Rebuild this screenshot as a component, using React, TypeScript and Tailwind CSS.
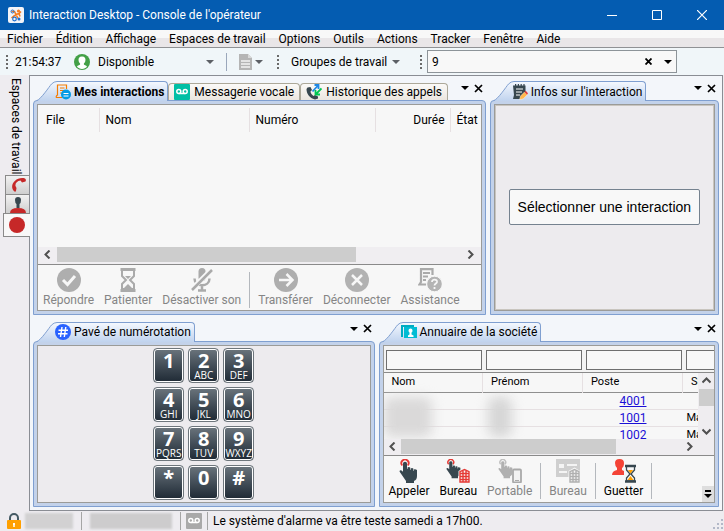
import type { ReactNode } from "react";

const menus = ["Fichier", "Édition", "Affichage", "Espaces de travail", "Options", "Outils", "Actions", "Tracker", "Fenêtre", "Aide"];

const keys = [
    ["1", ""], ["2", "ABC"], ["3", "DEF"],
    ["4", "GHI"], ["5", "JKL"], ["6", "MNO"],
    ["7", "PQRS"], ["8", "TUV"], ["9", "WXYZ"],
    ["*", ""], ["0", ""], ["#", ""],
];

const directory = [
    { poste: "4001", site: "" },
    { poste: "1001", site: "Mai" },
    { poste: "1002", site: "Mai" },
];

function Caret({ className = "text-[#5c6066]" }: { className?: string }) {
    return (
        <svg viewBox="0 0 8 4" className={`h-1 w-2 shrink-0 ${className}`} fill="currentColor">
            <path d="M0 0h8L4 4z" />
        </svg>
    );
}

function Cross() {
    return (
        <svg viewBox="0 0 9 9" className="h-[9px] w-[9px]" stroke="#000" strokeWidth="1.700" fill="none">
            <path d="M1 1l7 7M8 1L1 8" />
        </svg>
    );
}

function Chevron({ d }: { d: string }) {
    return (
        <svg viewBox="0 0 9 9" className="h-[9px] w-[9px]" stroke="#505050" strokeWidth="2" fill="none">
            <path d={d} />
        </svg>
    );
}

const LEFT = "M6.500 .5l-4 4 4 4";
const RIGHT = "M2.500 .5l4 4-4 4";
const UP = "M.5 6.500l4-4 4 4";
const DOWN = "M.5 2.500l4 4 4-4";

function Grip() {
    return (
        <svg viewBox="0 0 2 14" className="h-[14px] w-[2px] shrink-0" fill="#6a6a6a">
            <path d="M0 0h2v2H0zM0 4h2v2H0zM0 8h2v2H0zM0 12h2v2H0z" />
        </svg>
    );
}

function VoicemailGlyph({ bg }: { bg: string }) {
    return (
        <svg viewBox="0 0 16 16" className="h-4 w-4 shrink-0" fill="none" stroke="#fff" strokeWidth="1.500">
            <rect width="16" height="16" rx="1" fill={bg} stroke="none" />
            <circle cx="4.800" cy="7.500" r="2" />
            <circle cx="11.200" cy="7.500" r="2" />
            <path d="M4.800 9.500h6.400" />
        </svg>
    );
}

function ActiveTab({ icon, children, bold }: { icon: ReactNode; children: ReactNode; bold?: boolean }) {
    return (
        <button role="tab" aria-selected="true" className="relative z-10 -mb-px ml-1 flex h-5 items-stretch">
            <svg viewBox="0 0 20 20" className="h-5 w-5">
                <defs>
                    <linearGradient id="slant" x1="0" y1="0" x2="0" y2="1">
                        <stop offset="0" stopColor="#f4f8fe" />
                        <stop offset="1" stopColor="#c0d3ee" />
                    </linearGradient>
                </defs>
                <path d="M0 20C4 18 12 6 14.500 3Q17 .5 20 .5V20z" fill="url(#slant)" />
                <path d="M0 19.500C4 18 12 6 14.500 3Q17 .5 20 .5" fill="none" stroke="#7f9fd0" />
            </svg>
            <span className={`flex items-center gap-[3px] rounded-tr-sm border-t border-r border-[#7f9fd0] bg-linear-to-b from-[#f4f8fe] to-[#c0d3ee] pr-[3px] whitespace-nowrap ${bold ? "font-bold" : ""}`}>
                <span className="-ml-0.5">{icon}</span>
                {children}
            </span>
        </button>
    );
}

function Tab({ icon, children }: { icon: ReactNode; children: ReactNode }) {
    return (
        <button role="tab" aria-selected="false" className="flex h-[17px] items-center gap-1 rounded-t border border-b-0 border-[#aca899] bg-linear-to-b from-[#fbfaf8] to-[#ebe6df] px-[5px] whitespace-nowrap">
            {icon}
            {children}
        </button>
    );
}

function Panel({ tabs, children, className }: { tabs: ReactNode; children: ReactNode; className: string }) {
    return (
        <section className={`flex min-w-0 flex-col ${className}`}>
            <div className="flex h-6 shrink-0 items-end justify-between pr-[3px]">
                <div role="tablist" className="flex items-end">{tabs}</div>
                <div className="flex items-center gap-[5px] self-center">
                    <button aria-label="Options du volet"><Caret className="text-black" /></button>
                    <button aria-label="Fermer le volet"><Cross /></button>
                </div>
            </div>
            <div className="flex min-h-0 flex-1 flex-col rounded-t border border-[#7f9fd0] bg-[#c3d2ea] p-[3px]">
                <div className="flex min-h-0 flex-1 flex-col border border-[#9b9b98]">{children}</div>
            </div>
        </section>
    );
}

function ToolButton({ icon, label, disabled }: { icon: ReactNode; label: string; disabled?: boolean }) {
    return (
        <button disabled={disabled} className="flex flex-col items-center px-[5px] whitespace-nowrap text-black disabled:text-[#858585]">
            <svg viewBox="0 0 24 24" className="h-6 w-6" fill="none">{icon}</svg>
            <span className="leading-4">{label}</span>
        </button>
    );
}

function Separator() {
    return <span className="mx-[3px] mt-1 h-9 w-px shrink-0 bg-[#b4b8bd]" />;
}

// pointing hand shared by the call buttons
function Hand({ color, ring, small }: { color: string; ring: string; small?: boolean }) {
    return (
        <g transform={small ? "scale(.8)" : "translate(2 0)"}>
            <path d="M3.300 6.500A3.600 3.600 0 1 1 8.700 6.500" stroke={ring} strokeWidth="1.800" />
            <path d="M4 4.500q0-1.700 2-1.700t2 1.700V10h.5V8.500q1.200-1 2.700 0V11h.5V9.500q1.300-.8 2.600 0V12h.5v-1.500q1.500-.8 3.200.5V17q0 4-3 5v2H7v-2L.5 12.500q.5-2.500 3.500.3z" fill={color} />
        </g>
    );
}

function Tower({ color }: { color: string }) {
    return (
        <g>
            <path d="M12.500 24V12L18.500 8.500 24 12v12z" fill="#f7f7f7" />
            <path d="M14 23V12.700l4.500-2.200 4.500 2.200V23zM14 14.500h9M14 17.500h9M14 20.500h9M17 12v11M20 12v11" stroke={color} strokeWidth="1.400" />
        </g>
    );
}

function CheckIcon() {
    return <><circle cx="12" cy="12" r="12" fill="#aeaeae" /><path d="M6 12l4.500 4.500L18 8" stroke="#f7f7f7" strokeWidth="3" /></>;
}

function HourglassIcon() {
    return (
        <>
            <path d="M4.500 1.500h15M4.500 22.500h15" stroke="#aaa" strokeWidth="3" />
            <path d="M6 3v5l4 4-4 4v5h12v-5l-4-4 4-4V3" stroke="#aaa" strokeWidth="2" />
            <path d="M9 8h6l-3 3zM8 20l4-4 4 4z" fill="#aaa" />
        </>
    );
}

function MutedMicIcon() {
    return (
        <>
            <rect x="8.500" y="0" width="7" height="13" rx="3.500" fill="#aaa" />
            <path d="M4.500 10.500c0 9 15 9 15 0M12 17v4.500M8 22.500h8" stroke="#aaa" strokeWidth="2.500" />
            <path d="M2 21L21 2" stroke="#f7f7f7" strokeWidth="5" />
            <path d="M2 22L22 2" stroke="#aaa" strokeWidth="2.500" />
        </>
    );
}

function ArrowIcon() {
    return <><circle cx="12" cy="12" r="12" fill="#aeaeae" /><path d="M5 12h13M12.500 6l6 6-6 6" stroke="#f7f7f7" strokeWidth="2.500" /></>;
}

function CancelIcon() {
    return <><circle cx="12" cy="12" r="12" fill="#b2b2b2" /><path d="M7 7l10 10M17 7L7 17" stroke="#f7f7f7" strokeWidth="2.500" /></>;
}

function AssistIcon() {
    return (
        <>
            <path d="M8 16.500H1.500L3 14V1.200h11.500V7M5 5h7M5 8.500h5M5 12h3" stroke="#aaa" strokeWidth="2.200" />
            <circle cx="16.500" cy="16" r="7.800" fill="#b4b4b4" stroke="#f7f7f7" />
            <path d="M14 14c0-3.500 5.500-3 5 0-.3 1.500-2.500 1.500-2.500 3.500M16.500 19v2" stroke="#f7f7f7" strokeWidth="1.800" />
        </>
    );
}

function NotesIcon() {
    return (
        <svg viewBox="0 0 16 16" className="h-4 w-4">
            <path d="M1 1.500h12.500V10L9 15H1l1-4z" fill="#37474f" />
            <path d="M3 0h1.200v2H3zM5.800 0H7v2H5.800zM8.600 0h1.200v2H8.600zM11.400 0h1.200v2h-1.200z" fill="#37474f" />
            <path d="M4 5h7M4 8h6M4 11h4" stroke="#fff" strokeWidth="1" />
            <path d="M7.500 15.800l1-3.800 4-4 2.800 2.800-4 4z" fill="#ffb74d" stroke="#fff" strokeWidth=".4" />
            <path d="M12.500 8l1.200-1.200 2.300 2.400-1 1.500z" fill="#e53935" />
        </svg>
    );
}

export default function App() {
    return (
        <div className="flex h-screen flex-col overflow-hidden bg-[#eeecf0] font-[Roboto,sans-serif] text-[12px] leading-4 text-black">
            <header className="flex h-[30px] shrink-0 items-center justify-between bg-[#045cb1] pr-[17px] pl-2 text-white">
                <div className="flex items-center gap-[5px]">
                    <svg viewBox="0 0 16 16" className="h-4 w-4" fill="none">
                        <rect width="16" height="16" rx="2" fill="#f2f4f8" />
                        <path d="M3.500 4.500h3l1.500 3 3-1 2-2M3.500 11l3-2.500h2l1.500 3M11 6.500l1 3" stroke="#f47b20" strokeWidth="1.600" />
                        <circle cx="4.500" cy="4.500" r="1.500" stroke="#1e6fd0" />
                        <circle cx="6.500" cy="12" r="1.800" stroke="#1e6fd0" strokeWidth="1.200" />
                        <circle cx="10.500" cy="4" r="1.600" fill="#f47b20" />
                        <circle cx="11" cy="12" r="1.500" fill="#1e6fd0" />
                    </svg>
                    <h1>Interaction Desktop - Console de l'opérateur</h1>
                </div>
                <div className="flex items-center gap-[35px]">
                    <button aria-label="Réduire">
                        <svg viewBox="0 0 10 10" className="h-[10px] w-[10px]" stroke="#fff"><path d="M0 5.500h10" /></svg>
                    </button>
                    <button aria-label="Agrandir">
                        <svg viewBox="0 0 10 10" className="h-[10px] w-[10px]" stroke="#fff" fill="none"><path d="M.5 .5h9v9h-9z" /></svg>
                    </button>
                    <button aria-label="Fermer">
                        <svg viewBox="0 0 10 10" className="h-[10px] w-[10px]" stroke="#fff" strokeWidth="1.200"><path d="M0 0l10 10M10 0L0 10" /></svg>
                    </button>
                </div>
            </header>

            <nav className="flex h-[18px] shrink-0 items-center gap-[13px] border-b border-[#8f9194] bg-linear-to-b from-[#f8f8f8] from-50% to-[#e9e6e8] to-50% pl-[7px]">
                {menus.map((menu) => (
                    <button key={menu} className="whitespace-nowrap">{menu}</button>
                ))}
            </nav>

            <div className="flex h-[27px] shrink-0 items-center bg-[#f0f6f9] pl-[6px]">
                <Grip />
                <time className="ml-[7px] w-[59px]">21:54:37</time>
                <svg viewBox="0 0 16 16" className="h-4 w-4 shrink-0">
                    <circle cx="8" cy="8" r="8" fill="#43a047" />
                    <path d="M8 2.500c-2.800 0-3.800 2-3.400 4.200C4.900 8.500 6 9 6.200 10c.1 1-2.700 1.200-3.200 2.800C4 14 6 15 8 15s4-1 5-2.200c-.5-1.600-3.300-1.800-3.200-2.800.2-1 1.300-1.500 1.600-3.300C11.800 4.500 10.800 2.500 8 2.500z" fill="#fff" />
                </svg>
                <label htmlFor="status" className="sr-only">État</label>
                <div className="flex items-center pl-2">
                    <select id="status" className="w-[108px] appearance-none bg-transparent">
                        <option>Disponible</option>
                    </select>
                    <Caret />
                </div>
                <span className="mx-3 h-[18px] w-px bg-[#9aa7bb]" />
                <button aria-label="Notes d'état" className="flex items-center gap-[3px]">
                    <svg viewBox="0 0 13 16" className="h-4 w-[13px]">
                        <path d="M0 0h9l4 4v12H0z" fill="#b5b5b5" />
                        <path d="M2 7h9M2 10h9M2 13h9" stroke="#f3f3f3" strokeWidth="1.300" />
                        <path d="M9 0v4h4" fill="#d9d9d9" />
                    </svg>
                    <Caret />
                </button>
                <span className="ml-[14px]"><Grip /></span>
                <button className="ml-3 flex w-[109px] items-center justify-between whitespace-nowrap">
                    Groupes de travail
                    <Caret />
                </button>
                <span className="ml-5"><Grip /></span>
                <div className="ml-[5px] flex h-[23px] w-[250px] items-center gap-3 border border-[#8d9499] bg-[#f8f8f8] pr-1">
                    <input aria-label="Numéro" defaultValue="9" className="min-w-0 flex-1 bg-transparent pl-1 outline-none" />
                    <button aria-label="Effacer">
                        <svg viewBox="0 0 7 7" className="h-[7px] w-[7px]" stroke="#000" strokeWidth="1.800"><path d="M.5 .5l6 6M6.500 .5l-6 6" /></svg>
                    </button>
                    <button aria-label="Numéros récents"><Caret className="text-black" /></button>
                </div>
            </div>

            <div className="flex min-h-0 flex-1">
                <aside className="flex w-[29px] shrink-0 flex-col items-end">
                    <div className="mr-[5px] h-[100px] pt-[3px] whitespace-nowrap [writing-mode:vertical-rl]">Espaces de travail</div>
                    <button aria-label="Appels" className="flex h-5 w-6 items-center justify-center border border-r-0 border-[#8a8a8a] bg-linear-to-b from-[#f2f2f2] to-[#cfcfcf]">
                        <svg viewBox="0 0 16 16" className="h-4 w-4">
                            <path d="M4.500 14.500C-2 9 6-1 15 1.500q1.500 1 .5 3l-3.500 1-1.500-2C7 4 5 6.500 5.500 9L6.500 11l-.5 3q-.5 1-1.500.5z" fill="#c62828" />
                        </svg>
                    </button>
                    <button aria-label="Présence" className="flex h-[18px] w-6 items-end justify-center border-l border-[#8a8a8a] bg-linear-to-b from-[#f2f2f2] to-[#cfcfcf]">
                        <svg viewBox="0 0 16 16" className="h-4 w-4">
                            <path d="M5 3q0-3 3-3t3 3-1.500 4v4h-3V7Q5 6 5 3z" fill="#37474f" />
                            <path d="M0 16q0-5 8-5t8 5z" fill="#c62828" />
                        </svg>
                    </button>
                    <button aria-label="Enregistrement" className="z-10 -mr-px flex h-6 w-[27px] items-center border border-r-0 border-[#8a8a8a] bg-[#f8f8f8] pl-[5px]">
                        <span className="h-4 w-4 rounded-full bg-[#c62828]" />
                    </button>
                </aside>

                <main className="mr-px flex min-w-0 flex-1 flex-col gap-[2px] border border-[#8a8d94] bg-[#f3f6fa] px-[3px] pb-[3px]">
                    <div className="flex min-h-0 flex-[238] gap-1">
                        <Panel
                            className="flex-[452]"
                            tabs={
                                <>
                                    <ActiveTab
                                        bold
                                        icon={
                                            <svg viewBox="0 0 16 16" className="h-4 w-4" fill="none">
                                                <path d="M7 13.500H1.500Q.5 12.500 2.500 11V1h9v4M5 4h4.500M5 6.500h4M5 9h2" stroke="#f57c00" strokeWidth="1.200" />
                                                <circle cx="11" cy="10.500" r="5" fill="#039be5" />
                                                <path d="M8.500 9.500h5M8.500 12h5" stroke="#fff" strokeWidth="1.200" />
                                            </svg>
                                        }
                                    >
                                        Mes interactions
                                    </ActiveTab>
                                    <Tab icon={<VoicemailGlyph bg="#00bfa5" />}>Messagerie vocale</Tab>
                                    <Tab
                                        icon={
                                            <svg viewBox="0 0 16 16" className="h-4 w-4" fill="none">
                                                <path d="M.5 5c0 5 3 9 8.500 10.500l3-1v-2l-3-1.500-1.500 1C6 11 4.500 9 4.500 7.500L6 6 4.500 3 1.500 3.500z" fill="#37474f" />
                                                <path d="M6.500 7.500l5.500-6M8.500 1h4v4" stroke="#1e88e5" strokeWidth="1.800" />
                                                <path d="M15.500 4.500L10 10M9.500 6v4.500H14" stroke="#00c853" strokeWidth="1.800" />
                                            </svg>
                                        }
                                    >
                                        Historique des appels
                                    </Tab>
                                </>
                            }
                        >
                            <div className="flex min-h-0 flex-1 flex-col justify-between overflow-hidden border-b border-[#8a8a8a] bg-[#f7f7f7]">
                                <table className="mt-[3px] w-[520px] table-fixed text-left">
                                    <colgroup>
                                        <col className="w-[61px]" />
                                        <col className="w-[150px]" />
                                        <col className="w-[126px]" />
                                        <col className="w-[75px]" />
                                        <col />
                                    </colgroup>
                                    <thead>
                                        <tr className="h-6 [&>th]:border-r [&>th]:border-[#e6e0e2] [&>th]:font-normal">
                                            <th className="pl-2">File</th>
                                            <th className="pl-[6px]">Nom</th>
                                            <th className="pl-[6px]">Numéro</th>
                                            <th className="pr-[5px] text-right">Durée</th>
                                            <th className="pl-[6px]">État</th>
                                        </tr>
                                    </thead>
                                </table>
                                <div className="flex h-[17px] items-center bg-[#f0eef1] pb-[2px]">
                                    <button aria-label="Défiler à gauche" className="flex w-[19px] justify-center"><Chevron d={LEFT} /></button>
                                    <div className="flex-1"><div className="h-[15px] w-[74%] bg-[#cdcdcd]" /></div>
                                    <button aria-label="Défiler à droite" className="flex w-5 justify-center"><Chevron d={RIGHT} /></button>
                                </div>
                            </div>
                            <div className="flex h-[45px] shrink-0 items-start overflow-hidden bg-[#f7f7f7] pt-[3px]">
                                <ToolButton disabled label="Répondre" icon={<CheckIcon />} />
                                <ToolButton disabled label="Patienter" icon={<HourglassIcon />} />
                                <ToolButton disabled label="Désactiver son" icon={<MutedMicIcon />} />
                                <Separator />
                                <ToolButton disabled label="Transférer" icon={<ArrowIcon />} />
                                <ToolButton disabled label="Déconnecter" icon={<CancelIcon />} />
                                <ToolButton disabled label="Assistance" icon={<AssistIcon />} />
                            </div>
                        </Panel>

                        <Panel className="flex-[229]" tabs={<ActiveTab icon={<NotesIcon />}>Infos sur l'interaction</ActiveTab>}>
                            <div className="flex flex-1 items-center justify-center border border-[#c9c5bf] bg-[#edebee]">
                                <button className="h-9 rounded-xs border border-[#75828f] bg-[#f8f8f8] px-2 font-['Liberation_Sans',sans-serif] text-[14px] whitespace-nowrap">
                                    Sélectionner une interaction
                                </button>
                            </div>
                        </Panel>
                    </div>

                    <div className="flex min-h-0 flex-[190] gap-1">
                        <Panel
                            className="flex-[341]"
                            tabs={
                                <ActiveTab
                                    icon={
                                        <svg viewBox="0 0 16 16" className="h-4 w-4">
                                            <circle cx="8" cy="8" r="8" fill="#2962ff" />
                                            <path d="M7 3L5.500 13M10.800 3L9.300 13M3.500 6.200h9.500M3 9.800h9.500" stroke="#fff" strokeWidth="1.400" />
                                        </svg>
                                    }
                                >
                                    Pavé de numérotation
                                </ActiveTab>
                            }
                        >
                            <div className="grid flex-1 grid-cols-[repeat(3,31px)] content-center justify-center gap-1 bg-[#edebee] font-['Open_Sans',sans-serif]">
                                {keys.map(([digit, letters]) => (
                                    <button
                                        key={digit}
                                        className="flex h-[35px] flex-col items-center rounded-sm border border-[#6e767c] bg-linear-to-b from-[#6b757d] to-[#1f2a35] text-white ring-1 ring-white ring-inset"
                                    >
                                        <span className="text-[20px] leading-6 font-bold">{digit}</span>
                                        {letters && <span className="-mt-1 text-[10px] leading-3">{letters}</span>}
                                    </button>
                                ))}
                            </div>
                        </Panel>

                        <Panel
                            className="flex-[340]"
                            tabs={
                                <ActiveTab
                                    icon={
                                        <svg viewBox="0 0 16 16" className="h-4 w-4">
                                            <path d="M0 1h13v2H2v10H0z" fill="#00acc1" />
                                            <path d="M3 3h13v11H3z" fill="#00bcd4" />
                                            <path d="M7.500 6.500q0-2 2-2t2 2-1 2v2l2 1V13H7v-1.500l1.500-1v-2q-1-.5-1-2z" fill="#fff" />
                                        </svg>
                                    }
                                >
                                    Annuaire de la société
                                </ActiveTab>
                            }
                        >
                            <div className="flex shrink-0 gap-1 overflow-hidden bg-[#f3f3f3] pt-1 pb-[2px] pl-[2px]">
                                {["Nom", "Prénom", "Poste", "Site"].map((field) => (
                                    <input key={field} aria-label={`Filtrer ${field}`} className="h-5 w-24 shrink-0 border border-[#6f6f6f] bg-[#f8f8f8] px-1" />
                                ))}
                            </div>
                            <div className="flex min-h-0 flex-1 border-t border-[#8a8a8a] bg-[#f7f7f7]">
                                <div className="relative min-w-0 flex-1 overflow-hidden">
                                    <table className="w-[420px] table-fixed text-left">
                                        <colgroup>
                                            <col className="w-[99px]" />
                                            <col className="w-[100px]" />
                                            <col className="w-[100px]" />
                                            <col />
                                        </colgroup>
                                        <thead>
                                            <tr className="h-5 border-b border-[#8f8f8f] text-[11px] [&>th]:border-r [&>th]:border-[#e6e0e2] [&>th]:pl-2 [&>th]:font-normal">
                                                <th>Nom</th>
                                                <th>Prénom</th>
                                                <th>Poste</th>
                                                <th>Site</th>
                                            </tr>
                                        </thead>
                                        <tbody>
                                            {directory.map((row) => (
                                                <tr key={row.poste} className="h-[17px] border-b border-[#e6e0e2]">
                                                    <td />
                                                    <td />
                                                    <td className="pr-9 text-right"><a href="#" className="text-[#1a0fd6] underline">{row.poste}</a></td>
                                                    <td className="pl-1 text-[11px]">{row.site}</td>
                                                </tr>
                                            ))}
                                        </tbody>
                                    </table>
                                    <div className="absolute top-6 left-0 h-10 w-12 rounded-lg bg-[#dad9d9] blur-[6px]" />
                                    <div className="absolute top-6 left-[104px] h-10 w-6 rounded-lg bg-[#d6d6d6] blur-[6px]" />
                                </div>
                                <div className="flex w-4 shrink-0 flex-col items-center justify-between bg-[#efedf0]">
                                    <button aria-label="Défiler vers le haut" className="flex h-4 items-center"><Chevron d={UP} /></button>
                                    <div className="w-[15px] flex-1"><div className="h-[17px] bg-[#cdcdcd]" /></div>
                                    <button aria-label="Défiler vers le bas" className="flex h-4 items-center"><Chevron d={DOWN} /></button>
                                </div>
                            </div>
                            <div className="flex h-[17px] shrink-0 items-start border-b border-[#8a8a8a] bg-[#efedf0]">
                                <button aria-label="Défiler à gauche" className="flex h-[15px] w-[17px] items-center justify-center"><Chevron d={LEFT} /></button>
                                <div className="flex-1"><div className="h-[15px] w-[77%] bg-[#cdcdcd]" /></div>
                                <button aria-label="Défiler à droite" className="mr-4 flex h-[15px] w-[17px] items-center justify-center"><Chevron d={RIGHT} /></button>
                            </div>
                            <div className="flex h-[46px] shrink-0 items-start bg-[#f7f7f7] pt-[3px]">
                                <ToolButton label="Appeler" icon={<Hand color="#37474f" ring="#e53935" />} />
                                <ToolButton label="Bureau" icon={<><Hand color="#37474f" ring="#e53935" small /><Tower color="#e53935" /></>} />
                                <ToolButton
                                    disabled
                                    label="Portable"
                                    icon={
                                        <>
                                            <Hand color="#b0b0b0" ring="#c0c0c0" small />
                                            <rect x="15" y="10.500" width="8" height="13" rx="1" fill="#f2f2f2" stroke="#a9a9a9" strokeWidth="1.800" />
                                            <path d="M17 21.500h4" stroke="#a9a9a9" />
                                        </>
                                    }
                                />
                                <Separator />
                                <ToolButton
                                    disabled
                                    label="Bureau"
                                    icon={
                                        <>
                                            <path d="M0 0h24v18H0z" fill="#cfcfcf" />
                                            <path d="M3 5h5v4H3zM11 5h10v2H11zM3 12h8v2H3z" fill="#f4f4f4" />
                                            <Tower color="#b0b0b0" />
                                        </>
                                    }
                                />
                                <Separator />
                                <ToolButton
                                    label="Guetter"
                                    icon={
                                        <>
                                            <path d="M3 4q0-4 4.500-4T12 4t-2 5v2l3 1.500V16H0q0-4 5-5V9Q3 7 3 4z" fill="#f44336" />
                                            <path d="M12 5h12v19H12z" fill="#f7f7f7" />
                                            <path d="M13 7h11M13 22.500h11" stroke="#37474f" strokeWidth="2.500" />
                                            <path d="M14.500 8v3l3.500 4-3.500 4v3h8v-3L19 15l3.500-4V8" stroke="#37474f" strokeWidth="1.300" />
                                            <path d="M16 11h5l-2.500 3.500zM15.500 21l3-4 3 4z" fill="#ffa000" />
                                        </>
                                    }
                                />
                                <Separator />
                                <button aria-label="Autres boutons" className="ml-auto flex h-4 w-3 flex-col items-center justify-center gap-[2px] self-end bg-[#dedede]">
                                    <span className="h-[2px] w-[6px] bg-black" />
                                    <Caret className="text-black" />
                                </button>
                            </div>
                        </Panel>
                    </div>
                </main>
            </div>

            <footer className="flex h-5 shrink-0 items-center pl-[7px]">
                <svg viewBox="0 0 14 16" className="h-4 w-[14px]" fill="none">
                    <path d="M3 8V5a4 4 0 0 1 8 0v3" stroke="#455a64" strokeWidth="2" />
                    <rect y="7" width="14" height="9" rx="1" fill="#ffa000" />
                    <path d="M7 10v4M6 11h2" stroke="#fff" strokeWidth="1.500" />
                </svg>
                <span className="ml-1 h-4 w-12 bg-[#d2d1d2] blur-[1px]" />
                <span className="ml-2 h-[18px] w-px bg-[#a5a5a5]" />
                <span className="ml-2 h-4 w-[82px] bg-[#cdcccd] blur-[1px]" />
                <span className="mr-[5px] ml-2 h-[18px] w-px bg-[#a5a5a5]" />
                <VoicemailGlyph bg="#a9a9a9" />
                <span className="mx-[5px] h-[18px] w-px bg-[#a5a5a5]" />
                <p className="whitespace-nowrap">Le système d'alarme va être teste samedi a 17h00.</p>
                <svg viewBox="0 0 12 12" className="ml-auto h-3 w-3 self-end" fill="#b3b8c8">
                    <path d="M9 0h2v2H9zM9 4h2v2H9zM9 8h2v2H9zM5 4h2v2H5zM5 8h2v2H5zM1 8h2v2H1z" />
                </svg>
            </footer>
        </div>
    );
}
